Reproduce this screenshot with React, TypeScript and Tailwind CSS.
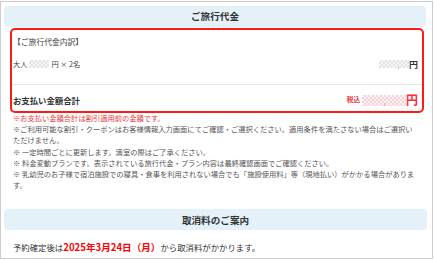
export default function App() {
  const checkerGray =
    "bg-[repeating-conic-gradient(#e4e4e4_0%_25%,#f6f6f6_0%_50%)] bg-[length:4px_4px]";
  const checkerPink =
    "bg-[repeating-conic-gradient(#f7d3da_0%_25%,#fdf0f2_0%_50%)] bg-[length:4px_4px]";
  return (
    <div className="font-['Noto_Sans_CJK_JP','Noto_Sans_CJK_SC',sans-serif] bg-white w-[434px] h-[260px] pt-px">
      <div className="w-[433px] h-[258px] border border-[#cccccc] pt-[4px] pl-[3px] overflow-hidden">
        {/* header 1 */}
        <div className="w-[422px] h-[21px] rounded-[4px] bg-[#e4f1f8] flex items-center justify-center text-[9.6px] font-bold text-[#333]">
          ご旅行代金
        </div>

        {/* red box */}
        <div className="ml-[6px] mt-px w-[414px] h-[85px] border-2 border-[#ff1a1a] rounded-[5px] flex flex-col pt-[6px] pb-[3px] text-[#444]">
          <div className="px-px text-[7.8px] leading-[12px]">【ご旅行代金内訳】</div>
          <div className="mt-[10px] pl-px pr-[4px] flex items-center justify-between h-[12px]">
            <div className="flex items-center text-[7.2px]">
              <span>大人</span>
              <span className={`ml-[2px] w-[20px] h-[8px] ${checkerGray}`} />
              <span className="ml-[2px]">円 × 2名</span>
            </div>
            <div className="flex items-center">
              <span className={`relative w-[30px] h-[8px] ${checkerGray}`}>
                <span className="absolute left-[19px] bottom-[-1px] w-px h-[2px] bg-[#bbbbbb]" />
              </span>
              <span className="text-[9px] font-bold text-[#333] leading-none">円</span>
            </div>
          </div>
          <div className="mt-[14px] h-px bg-[#e6e6e6]" />
          <div className="mt-[7px] pl-px pr-[4px] flex items-center justify-between h-[16px]">
            <span className="text-[8.4px] font-bold text-[#333]">お支払い金額合計</span>
            <div className="flex items-center">
              <span className="text-[6.6px] text-[#e8383d] font-bold">税込</span>
              <span className={`relative ml-[2px] w-[44px] h-[11px] ${checkerPink}`}>
                <span className="absolute left-[22px] bottom-[0px] w-px h-[3px] bg-[#efaab8]" />
              </span>
              <span className="text-[12px] font-bold text-[#ff2a3a] leading-none">円</span>
            </div>
          </div>
        </div>

        {/* notes */}
        <div className="ml-[9px] w-[403px] text-[7.27px] leading-[11.2px] text-[#555]">
          <p className="text-[#e8383d]">※お支払い金額合計は割引適用前の金額です。</p>
          <p>※ご利用可能な割引・クーポンはお客様情報入力画面にてご確認・ご選択ください。適用条件を満たさない場合はご選択いただけません。</p>
          <p>※ 一定時間ごとに更新します。満室の際はご了承ください。</p>
          <p>※ 料金変動プランです。表示されている旅行代金・プラン内容は最終確認画面でご確認ください。</p>
          <p>※ 乳幼児のお子様で宿泊施設での寝具・食事を利用されない場合でも「施設使用料」等（現地払い）がかかる場合があります。</p>
        </div>

        {/* header 2 */}
        <div className="mt-[18px] w-[423px] h-[21px] rounded-[4px] bg-[#e4f1f8] flex items-center justify-center text-[9.6px] font-bold text-[#333]">
          取消料のご案内
        </div>

        <div className="mt-[10px] ml-[9px] flex items-baseline text-[8.4px] leading-[14px] text-[#333]">
          <span>予約確定後は</span>
          <span className="text-[9.6px] font-bold text-[#ff0000]">2025年3月24日（月）</span>
          <span>から取消料がかかります。</span>
        </div>
      </div>
    </div>
  );
}
